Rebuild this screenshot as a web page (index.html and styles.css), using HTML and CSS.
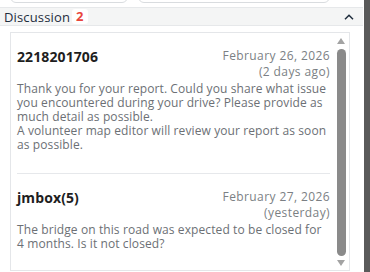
FILE: index.html
```html
<!DOCTYPE html>
<html lang="en">
<head>
    <meta charset="UTF-8">
    <title>Discussion</title>
    <link rel="stylesheet" href="styles.css">
</head>
<body>

<div class="page">
    <div class="main">
        <div class="fields">
            <div class="field field-a"></div>
            <div class="field field-b"></div>
        </div>

        <div class="section-head">
            <span class="title">Discussion</span>
            <span class="count">2</span>
            <svg class="chevron" width="10" height="6" viewBox="0 0 10 6">
                <path d="M1 5.2 L5 1.2 L9 5.2" fill="none" stroke="#1f2d3d" stroke-width="1.5"/>
            </svg>
        </div>

        <div class="thread">
            <div class="comments">
                <div class="comment">
                    <div class="comment-head">
                        <span class="author">2218201706</span>
                        <span class="date">February 26, 2026<br>(2 days ago)</span>
                    </div>
                    <p class="text">Thank you for your report. Could you share what issue you encountered during your drive? Please provide as much detail as possible.<br>A volunteer map editor will review your report as soon as possible.</p>
                </div>
                <div class="comment">
                    <div class="comment-head">
                        <span class="author">jmbox(5)</span>
                        <span class="date">February 27, 2026<br>(yesterday)</span>
                    </div>
                    <p class="text">The bridge on this road was expected to be closed for 4 months. Is it not closed?</p>
                </div>
            </div>
            <div class="scrollbar">
                <span class="arrow arrow-up"></span>
                <span class="thumb"></span>
                <span class="arrow arrow-down"></span>
            </div>
        </div>
    </div>
    <div class="page-bar"></div>
</div>

</body>
</html>
```

FILE: styles.css
```css
* { margin: 0; padding: 0; box-sizing: border-box; }
body { font-family: "Open Sans", "Noto Sans", sans-serif; background: #fff; width: 370px; height: 272px; overflow: hidden; }
.page { display: flex; height: 272px; }
.main { width: 363px; }
.page-bar { width: 6px; margin-left: 1px; background-color: #5a5a5a; }

/**** top fields ****/
.fields { height: 3px; overflow: hidden; display: flex; align-items: flex-end; gap: 10px; padding-left: 10px; }
.field { height: 30px; border: 1px solid #d9dcdf; border-radius: 6px; }
.field-a { width: 118px; }
.field-b { width: 192px; }

/**** header ****/
.section-head { margin-top: 4px; height: 19px; display: flex; align-items: center; padding-left: 4px; padding-right: 9px; background-color: #f4f5f5; border-top: 1px solid #e6e8ea; border-bottom: 1px solid #e6e8ea; }
.section-head .title { font-size: 13px; color: #1f2d3d; letter-spacing: 0.15px; }
.section-head .count { margin-left: 2px; padding: 0 4px; background: #fff; border-radius: 3px; color: #e8453c; font-weight: 700; font-size: 13px; line-height: 15px; }
.section-head .chevron { margin-left: auto; }

/**** thread ****/
.thread { margin: 6px 13px 0 10px; height: 239px; border: 1px solid #e4e6e9; display: flex; }
.comments { flex: 1; padding: 0 6px 0 6px; }
.comment { padding: 15px 0 21px; }
.comment + .comment { border-top: 1px solid #e6e8eb; padding-top: 15px; }
.comment-head { display: flex; justify-content: space-between; align-items: flex-start; }
.author { font-size: 14px; font-weight: 700; color: #1e1e1e; line-height: 17px; margin-top: 0; letter-spacing: 0.1px; }
.date { font-size: 12px; color: #7b7f84; text-align: right; line-height: 16px; letter-spacing: 0.4px; }
.text { font-size: 12px; line-height: 14px; color: #6c7075; margin-top: 2px; letter-spacing: 0.1px; }

.scrollbar { width: 10px; margin-right: 3px; display: flex; flex-direction: column; align-items: center; padding: 5px 0 4px; }
.thumb { flex: 1; width: 9px; margin: 5px 0 4px; background-color: #8a8a8a; border-radius: 5px; }
.arrow { width: 0; height: 0; border-left: 4px solid transparent; border-right: 4px solid transparent; }
.arrow-up { border-bottom: 6px solid #a3a3a3; }
.arrow-down { border-top: 6px solid #a3a3a3; }
```
